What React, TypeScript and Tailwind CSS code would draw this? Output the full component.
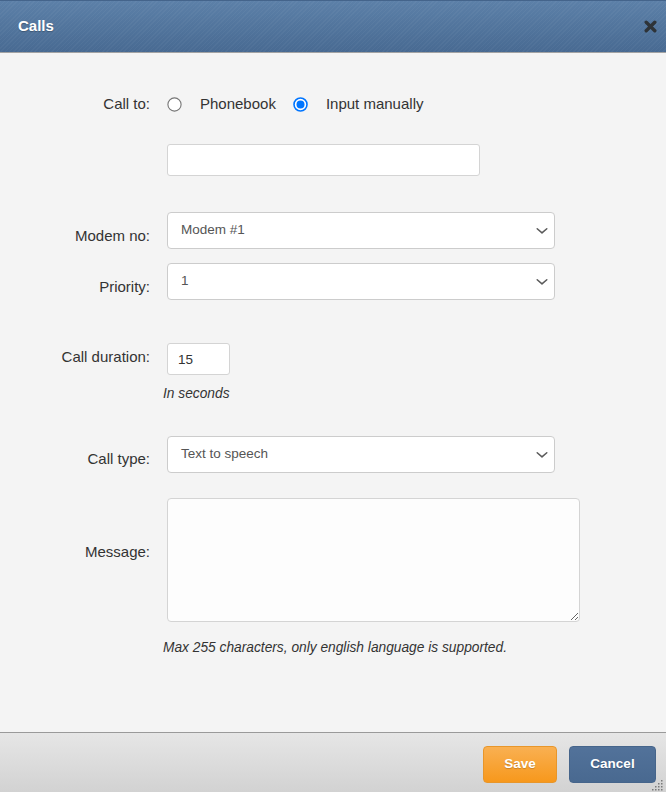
import React from "react";

function Chevron() {
  return (
    <svg width="12" height="7" viewBox="0 0 12 7" className="absolute right-[6px] top-1/2 -translate-y-1/2">
      <path d="M1.2 1.2 L6 5.4 L10.8 1.2" fill="none" stroke="#5a5a5a" strokeWidth="1.5" strokeLinecap="round" strokeLinejoin="round" />
    </svg>
  );
}

function Select({ value }: { value: string }) {
  return (
    <div className="relative w-[388px] h-[37px] bg-white border border-[#cccccc] rounded-[4px] flex items-center pl-[13px] text-[13.5px] text-[#555]">
      <span>{value}</span>
      <Chevron />
    </div>
  );
}

function Radio({ checked }: { checked?: boolean }) {
  return (
    <svg width="15" height="15" viewBox="0 0 15 15" className="shrink-0">
      {checked ? (
        <>
          <circle cx="7.5" cy="7.5" r="6.5" fill="white" stroke="#0075ff" strokeWidth="1.6" />
          <circle cx="7.5" cy="7.5" r="4" fill="#0075ff" />
        </>
      ) : (
        <circle cx="7.5" cy="7.5" r="6.6" fill="white" stroke="#767676" strokeWidth="1.1" />
      )}
    </svg>
  );
}

export default function App() {
  const label = "w-[150px] shrink-0 text-right text-[15px] leading-[20px] text-[#333]";
  return (
    <div className="w-[666px] h-[792px] flex flex-col bg-[#f4f4f4] font-['Liberation_Sans',Arial,sans-serif] overflow-hidden">
      <div className="h-[53px] shrink-0 border-t border-t-[#44648b] border-b border-b-[#a3a3a3] bg-[image:repeating-linear-gradient(135deg,rgba(255,255,255,0.035)_0px,rgba(255,255,255,0.035)_1px,transparent_1px,transparent_3px),linear-gradient(#5c80a8,#486a92)] flex items-center justify-between pl-[18px] pr-[10px]">
        <span className="text-white font-bold text-[15px] [text-shadow:0_1px_1px_rgba(0,0,0,0.25)]">Calls</span>
        <svg width="13" height="13" viewBox="0 0 13 13" className="translate-x-[1px]">
          <path d="M2.2 2.2 L10.8 10.8 M10.8 2.2 L2.2 10.8" stroke="#2e3338" strokeWidth="3.4" strokeLinecap="round" />
        </svg>
      </div>

      <div className="flex-1 flex flex-col pt-[41px]">
        <div className="flex items-center h-[20px]">
          <div className={label}>Call to:</div>
          <div className="ml-[17px] flex items-center text-[15px] text-[#333]">
            <Radio />
            <span className="ml-[18px]">Phonebook</span>
            <span className="ml-[17px] flex"><Radio checked /></span>
            <span className="ml-[18px]">Input manually</span>
          </div>
        </div>

        <div className="flex mt-[30px]">
          <div className="w-[150px] shrink-0" />
          <div className="ml-[17px] w-[313px] h-[32px] bg-white border border-[#d4d4d4] rounded-[3px]" />
        </div>

        <div className="flex mt-[36px]">
          <div className={label + " pt-[14px]"}>Modem no:</div>
          <div className="ml-[17px]"><Select value="Modem #1" /></div>
        </div>

        <div className="flex mt-[14px]">
          <div className={label + " pt-[14px]"}>Priority:</div>
          <div className="ml-[17px]"><Select value="1" /></div>
        </div>

        <div className="flex mt-[43px]">
          <div className={label + " pt-[4px]"}>Call duration:</div>
          <div className="ml-[17px] w-[63px] h-[32px] bg-white border border-[#d4d4d4] rounded-[3px] flex items-center pl-[10px] pt-[2px] text-[13.5px] text-[#333]">15</div>
        </div>

        <div className="mt-[9px] ml-[163px] text-[13.75px] leading-[20px] italic text-[#333]">In seconds</div>

        <div className="flex mt-[32px]">
          <div className={label + " pt-[13px]"}>Call type:</div>
          <div className="ml-[17px]"><Select value="Text to speech" /></div>
        </div>

        <div className="flex mt-[25px]">
          <div className={label + " pt-[44px]"}>Message:</div>
          <textarea className="ml-[17px] w-[413px] h-[124px] bg-[#fdfdfd] border border-[#d4d4d4] rounded-[4px] outline-none" />
        </div>

        <div className="mt-[16px] ml-[163px] text-[13.75px] leading-[20px] italic text-[#333]">
          Max 255 characters, only english language is supported.
        </div>
      </div>

      <div className="relative h-[60px] shrink-0 border-t border-[#9a9a9a] bg-[linear-gradient(#e6e6e6,#d2d2d2)] flex justify-end items-start pt-[13px] pr-[10px] gap-[12px]">
        <div className="w-[74px] h-[37px] rounded-[4px] border border-[#e8962a] bg-[linear-gradient(#f9b052,#f7981c)] flex items-center justify-center text-white font-bold text-[13.5px] [text-shadow:0_1px_1px_rgba(0,0,0,0.2)]">
          Save
        </div>
        <div className="w-[87px] h-[37px] rounded-[4px] border border-[#46658b] bg-[linear-gradient(#52729a,#496990)] flex items-center justify-center text-white font-bold text-[13.5px] [text-shadow:0_1px_1px_rgba(0,0,0,0.2)]">
          Cancel
        </div>
        <svg width="12" height="12" viewBox="0 0 12 12" className="absolute right-[2px] bottom-[1px]">
          {[
            [10, 2], [10, 5], [7, 5], [10, 8], [7, 8], [4, 8], [10, 11], [7, 11], [4, 11], [1, 11],
          ].map(([x, y], i) => (
            <rect key={i} x={x - 1} y={y - 1} width="1.5" height="1.5" fill="#7a7a7a" />
          ))}
        </svg>
      </div>
    </div>
  );
}
